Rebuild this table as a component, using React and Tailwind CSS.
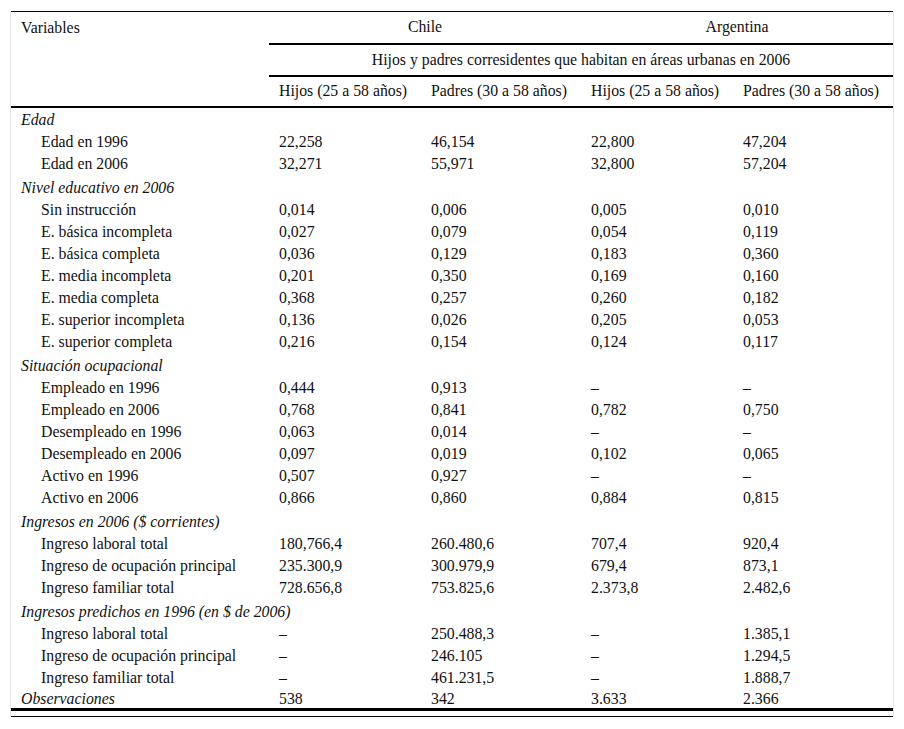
import React from "react";

const sections = [
  {
    title: "Edad",
    rows: [
      ["Edad en 1996", "22,258", "46,154", "22,800", "47,204"],
      ["Edad en 2006", "32,271", "55,971", "32,800", "57,204"],
    ],
  },
  {
    title: "Nivel educativo en 2006",
    rows: [
      ["Sin instrucción", "0,014", "0,006", "0,005", "0,010"],
      ["E. básica incompleta", "0,027", "0,079", "0,054", "0,119"],
      ["E. básica completa", "0,036", "0,129", "0,183", "0,360"],
      ["E. media incompleta", "0,201", "0,350", "0,169", "0,160"],
      ["E. media completa", "0,368", "0,257", "0,260", "0,182"],
      ["E. superior incompleta", "0,136", "0,026", "0,205", "0,053"],
      ["E. superior completa", "0,216", "0,154", "0,124", "0,117"],
    ],
  },
  {
    title: "Situación ocupacional",
    rows: [
      ["Empleado en 1996", "0,444", "0,913", "–", "–"],
      ["Empleado en 2006", "0,768", "0,841", "0,782", "0,750"],
      ["Desempleado en 1996", "0,063", "0,014", "–", "–"],
      ["Desempleado en 2006", "0,097", "0,019", "0,102", "0,065"],
      ["Activo en 1996", "0,507", "0,927", "–", "–"],
      ["Activo en 2006", "0,866", "0,860", "0,884", "0,815"],
    ],
  },
  {
    title: "Ingresos en 2006 ($ corrientes)",
    rows: [
      ["Ingreso laboral total", "180,766,4", "260.480,6", "707,4", "920,4"],
      ["Ingreso de ocupación principal", "235.300,9", "300.979,9", "679,4", "873,1"],
      ["Ingreso familiar total", "728.656,8", "753.825,6", "2.373,8", "2.482,6"],
    ],
  },
  {
    title: "Ingresos predichos en 1996 (en $ de 2006)",
    rows: [
      ["Ingreso laboral total", "–", "250.488,3", "–", "1.385,1"],
      ["Ingreso de ocupación principal", "–", "246.105", "–", "1.294,5"],
      ["Ingreso familiar total", "–", "461.231,5", "–", "1.888,7"],
    ],
  },
];

const App = () => {
  return (
    <div className="min-h-[729px] bg-white px-[10px] pt-[11px] text-[#111] font-['Liberation_Serif',serif] text-[15.8px] leading-[18px]">
      <div className="border-x border-[#e6e6e6]">
        <table className="w-full border-collapse table-fixed">
          <colgroup>
            <col className="w-[258px]" />
            <col className="w-[152px]" />
            <col className="w-[160px]" />
            <col className="w-[152px]" />
            <col className="w-[160px]" />
          </colgroup>
          <thead>
            <tr className="border-t border-black h-[32px]">
              <th rowSpan={3} className="text-left font-normal align-top pl-[10px] pt-[7px]">
                Variables
              </th>
              <th colSpan={2} className="font-normal text-center border-b-2 border-black">
                Chile
              </th>
              <th colSpan={2} className="font-normal text-center border-b-2 border-black">
                Argentina
              </th>
            </tr>
            <tr className="h-[32px]">
              <th colSpan={4} className="font-normal text-center border-b-2 border-black">
                Hijos y padres corresidentes que habitan en áreas urbanas en 2006
              </th>
            </tr>
            <tr className="h-[31px] border-b-2 border-black">
              <th className="font-normal text-left pl-[10px]">Hijos (25 a 58 años)</th>
              <th className="font-normal text-left pl-[10px]">Padres (30 a 58 años)</th>
              <th className="font-normal text-left pl-[10px]">Hijos (25 a 58 años)</th>
              <th className="font-normal text-left pl-[10px]">Padres (30 a 58 años)</th>
            </tr>
          </thead>
          <tbody>
            {sections.map((sec, si) => (
              <React.Fragment key={si}>
                <tr className={si === 0 ? "h-[23px]" : "h-[24px]"}>
                  <td colSpan={5} className="italic pl-[10px] align-bottom pb-[1px]">
                    {sec.title}
                  </td>
                </tr>
                {sec.rows.map((r, ri) => (
                  <tr key={ri} className="h-[22px]">
                    <td className="pl-[30px] pt-[2px]">{r[0]}</td>
                    <td className="pl-[10px] pt-[2px]">{r[1]}</td>
                    <td className="pl-[10px] pt-[2px]">{r[2]}</td>
                    <td className="pl-[10px] pt-[2px]">{r[3]}</td>
                    <td className="pl-[10px] pt-[2px]">{r[4]}</td>
                  </tr>
                ))}
              </React.Fragment>
            ))}
            <tr className="h-[22px] border-b-[3px] border-black">
              <td className="italic pl-[10px] pt-[2px]">Observaciones</td>
              <td className="pl-[10px] pt-[2px]">538</td>
              <td className="pl-[10px] pt-[2px]">342</td>
              <td className="pl-[10px] pt-[2px]">3.633</td>
              <td className="pl-[10px] pt-[2px]">2.366</td>
            </tr>
          </tbody>
        </table>
        <div className="h-[5px]" />
        <div className="border-t border-black" />
      </div>
    </div>
  );
};

export default App;
